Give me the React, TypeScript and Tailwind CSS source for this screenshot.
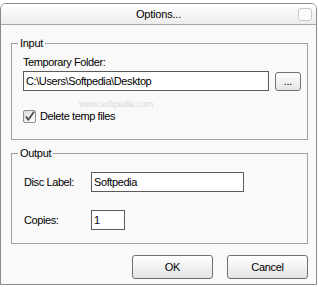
import React, { useState } from 'react';

const font = { fontFamily: '"Liberation Sans", Arial, sans-serif' };

// grey XP-ish push button
const Btn: React.FC<{ label: string; className?: string }> = ({ label, className = '' }) => (
  <button
    className={`shrink-0 flex items-center justify-center rounded-[3px] border border-[#707070] bg-gradient-to-b from-[#ffffff] to-[#e4e4e4] text-[11px] tracking-[-0.3px] text-black ${className}`}
  >
    {label}
  </button>
);

const Field: React.FC<{ value: string; className?: string }> = ({ value, className = '' }) => (
  <div
    className={`shrink-0 flex items-center border border-[#5a5a5a] bg-white pl-[2px] text-[11px] tracking-[-0.4px] text-black ${className}`}
  >
    {value}
  </div>
);

export default function App() {
  const [deleteTemp, setDeleteTemp] = useState(true);

  return (
    <div className="w-[318px] h-[287px] bg-white pt-[3px]" style={font}>
      <div className="w-[317px] h-[282px] flex flex-col border border-[#8a8a8a] rounded-t-[6px] bg-[#f9f9f9] overflow-hidden">
        {/* Title bar */}
        <div className="h-[21px] shrink-0 grid grid-cols-[1fr_auto_1fr] items-center border-b border-[#a8a8a8] bg-gradient-to-b from-[#ffffff] to-[#ececec]">
          <div />
          <span className="text-[11px] tracking-[-0.2px] text-black">Options...</span>
          <div className="flex justify-end pr-[4px]">
            <div className="w-[14px] h-[13px] rounded-[3px] border border-[#c8c8c8] bg-[#fbfbfb]" />
          </div>
        </div>

        {/* Body */}
        <div className="relative flex flex-col pl-[10px] pr-[8px] pt-[11px]">
          <fieldset className="border border-[#a0a0a0] p-0 m-0 min-w-0">
            <legend className="ml-[6px] px-[2px] text-[11px] leading-[14px] tracking-[-0.3px] text-black">Input</legend>
            <div className="flex flex-col pl-[11px] pr-[6px] pb-[16px]">
              <span className="mt-[6px] text-[11px] leading-[13px] tracking-[-0.4px] text-black">Temporary Folder:</span>
              <div className="mt-[2px] flex items-center gap-[6px]">
                <Field value="C:\Users\Softpedia\Desktop" className="w-[246px] h-[20px]" />
                <Btn label="..." className="w-[26px] h-[19px]" />
              </div>
              <label className="mt-[19px] flex items-center gap-[4px] cursor-default">
                <span
                  onClick={() => setDeleteTemp(!deleteTemp)}
                  className="w-[13px] h-[13px] rounded-[2px] border border-[#8f8f8f] bg-gradient-to-br from-[#dcdcdc] to-[#ffffff] flex items-center justify-center"
                >
                  {deleteTemp && (
                    <svg width="11" height="11" viewBox="0 0 11 11">
                      <path d="M1.8 5.5 L4.3 8.8 L10 0.8" fill="none" stroke="#505050" strokeWidth="1.8" />
                    </svg>
                  )}
                </span>
                <span className="text-[11px] leading-[13px] tracking-[-0.4px] text-black">Delete temp files</span>
              </label>
            </div>
          </fieldset>

          {/* faint watermark */}
          <span className="absolute left-[78px] top-[73px] text-[9px] tracking-[-0.2px] text-[#dadada]">www.softpedia.com</span>

          <fieldset className="mt-[6px] border border-[#a0a0a0] p-0 m-0 min-w-0">
            <legend className="ml-[6px] px-[2px] text-[11px] leading-[14px] tracking-[-0.3px] text-black">Output</legend>
            <div className="flex flex-col px-[12px] pt-[12px] pb-[13px] gap-[18px]">
              <div className="flex items-center">
                <span className="w-[67px] text-[11px] tracking-[-0.4px] text-black">Disc Label:</span>
                <Field value="Softpedia" className="w-[153px] h-[20px]" />
              </div>
              <div className="flex items-center">
                <span className="w-[67px] text-[11px] tracking-[-0.4px] text-black">Copies:</span>
                <Field value="1" className="w-[34px] h-[20px]" />
              </div>
            </div>
          </fieldset>

          <div className="mt-[11px] flex justify-end gap-[14px]">
            <Btn label="OK" className="w-[81px] h-[24px]" />
            <Btn label="Cancel" className="w-[81px] h-[24px]" />
          </div>
        </div>
      </div>
    </div>
  );
}
